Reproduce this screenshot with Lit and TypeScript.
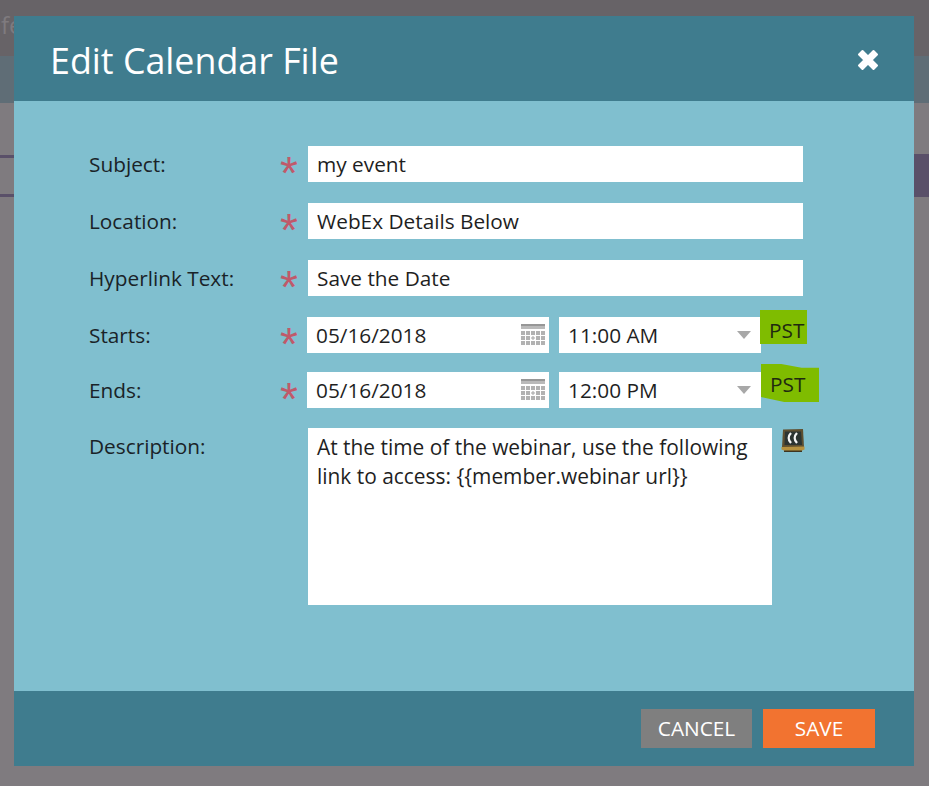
import { css, html, LitElement, svg } from 'lit'
import { customElement } from 'lit/decorators.js'

const calendarCells = [7, 12, 17].flatMap((y, row) =>
  [0, 5, 10, 15, 20].map((x, col) =>
    row === 1 && col === 2
      ? svg`<path d="M11.5 12h1v1.5h1.5v1h-1.5v1.5h-1v-1.500h-1.5v-1h1.5z" fill="#a4a4a4" />`
      : svg`<rect x=${x} y=${y} width="4" height="4" fill="#b2b2b2" />`,
  ),
)

const calendarIcon = html`
  <svg class="cal" width="24" height="22" viewBox="0 0 24 22" aria-hidden="true">
    <rect x="0" y="0" width="24" height="2" fill="#979797" />
    <rect x="0" y="2" width="24" height="3" fill="#bababa" />
    ${calendarCells}
  </svg>
`

const caretIcon = html`
  <svg class="caret" width="14" height="8" viewBox="0 0 14 8" aria-hidden="true">
    <path d="M0 0H14L7 8Z" fill="#a8a8a8" />
  </svg>
`

const boardIcon = html`
  <svg class="board" width="24" height="24" viewBox="0 0 24 24" aria-hidden="true">
    <path d="M2 0.5L22 0L23 18L1 18.5Z" fill="#5e4f30" />
    <path d="M4 2.5H20L21 16H3.5Z" fill="#2c3432" />
    <path d="M10 4C7 7 7 11 10 14M16 4C13 7 13 11 16 14" fill="none" stroke="#f4f4f4" stroke-width="2.4" />
    <path d="M0.5 18L23.5 17.5V20.5L20 22H4L0.5 20.5Z" fill="#b6913f" />
    <path d="M3 21.5H21V23H3Z" fill="#3d3420" />
  </svg>
`

@customElement('app-root')
export class AppRoot extends LitElement {
  static styles = css`
    :host {
      display: block;
      position: relative;
      width: 929px;
      height: 786px;
      overflow: hidden;
      background: #7f7b7f;
      font-family: 'Open Sans', 'Liberation Sans', sans-serif;
    }

    .backdrop-top {
      height: 56px;
      background: #676367;
      color: #7f7b7f;
      font-size: 24px;
      line-height: 50px;
      padding-left: 1px;
    }

    .backdrop-band {
      height: 47px;
      background: #5f6d76;
    }

    .backdrop-rows {
      display: flex;
      justify-content: space-between;
      margin-top: 51px;
    }

    .backdrop-lines {
      width: 14px;
      height: 43px;
      display: flex;
      flex-direction: column;
      justify-content: space-between;
      padding: 1px 0 0;
      box-sizing: border-box;
    }

    .backdrop-lines i {
      display: block;
      height: 3px;
      background: #5a5069;
    }

    .backdrop-block {
      width: 15px;
      height: 43px;
      background: #5a5069;
    }

    .modal {
      position: absolute;
      left: 14px;
      top: 16px;
      width: 900px;
      height: 750px;
      display: flex;
      flex-direction: column;
      background: #80bfcf;
    }

    header {
      flex: none;
      height: 85px;
      box-sizing: border-box;
      display: flex;
      align-items: center;
      justify-content: space-between;
      padding: 2px 34px 0 36px;
      background: #3f7c8e;
      color: #fff;
    }

    h1 {
      margin: 0;
      font-size: 35.8px;
      font-weight: 400;
      line-height: 46px;
    }

    .close {
      display: block;
    }

    .form {
      flex: 1;
      display: grid;
      grid-template-columns: 192px 27px 1fr;
      grid-template-rows: 57px 57px 57px 55px 56px 177px;
      padding: 45px 0 0 75px;
      color: #1a2328;
      font-size: 20.8px;
      line-height: 37px;
    }

    .row {
      display: contents;
    }

    .label {
      white-space: nowrap;
    }

    .star {
      color: #c0596a;
      font-family: 'Liberation Sans', sans-serif;
      font-size: 46px;
      line-height: 55px;
      height: 36px;
      margin-left: -1px;
    }

    .input {
      box-sizing: border-box;
      height: 36px;
      background: #fff;
      padding-left: 9px;
      color: #1f1f1f;
      white-space: nowrap;
    }

    .wide {
      width: 495px;
    }

    .split {
      display: flex;
      align-items: flex-start;
      margin-left: -1px;
    }

    .date {
      width: 242px;
      display: flex;
      align-items: center;
      justify-content: space-between;
      padding-right: 4px;
    }

    .time {
      width: 202px;
      margin-left: 10px;
      display: flex;
      align-items: center;
      justify-content: space-between;
      padding-right: 10px;
    }

    .tz {
      box-sizing: border-box;
      background: #7fbc00;
      color: #1f2a10;
      line-height: 40px;
      padding-left: 9px;
    }

    .tz.first {
      width: 47px;
      height: 34px;
      margin: -7px 0 0 -1px;
    }

    .tz.second {
      width: 58px;
      height: 38px;
      margin: -8px 0 0 0;
      clip-path: polygon(0 0, 35% 0, 70% 10%, 100% 10%, 100% 100%, 40% 100%, 0 87%);
    }

    .desc-wrap {
      display: flex;
      align-items: flex-start;
    }

    .textarea {
      box-sizing: border-box;
      width: 464px;
      height: 177px;
      padding: 5px 9px;
      background: #fff;
      color: #1f1f1f;
      font-size: 20.9px;
      line-height: 29px;
    }

    .board {
      margin: 1px 0 0 9px;
      display: block;
    }

    footer {
      flex: none;
      height: 75px;
      display: flex;
      justify-content: flex-end;
      gap: 11px;
      padding: 18px 39px 0 0;
      box-sizing: border-box;
      background: #3f7c8e;
    }

    .btn {
      height: 39px;
      box-sizing: border-box;
      padding-bottom: 2px;
      display: flex;
      align-items: center;
      justify-content: center;
      color: #fff;
      font-size: 20.8px;
    }

    .cancel {
      width: 111px;
      background: #7f7f7f;
    }

    .save {
      width: 112px;
      background: #f27330;
    }
  `

  private renderRow(label: string, field: unknown) {
    return html`
      <div class="row">
        <div class="label">${label}</div>
        <div class="star">*</div>
        <div class="field">${field}</div>
      </div>
    `
  }

  private renderDateTime(date: string, time: string, tzClass: string) {
    return html`
      <div class="split">
        <div class="input date">${date}${calendarIcon}</div>
        <div class="input time">${time}${caretIcon}</div>
        <div class=${`tz ${tzClass}`}>PST</div>
      </div>
    `
  }

  render() {
    return html`
      <div class="backdrop-top">fe</div>
      <div class="backdrop-band"></div>
      <div class="backdrop-rows">
        <div class="backdrop-lines"><i></i><i></i></div>
        <div class="backdrop-block"></div>
      </div>

      <div class="modal">
        <header>
          <h1>Edit Calendar File</h1>
          <svg class="close" width="24" height="24" viewBox="0 0 24 24" aria-hidden="true">
            <path d="M3 6.500L6.500 3L12 8.500L17.500 3L21 6.500L15.500 12L21 17.500L17.500 21L12 15.500L6.500 21L3 17.500L8.500 12Z" fill="#fff" stroke="#fff" stroke-width="2" stroke-linejoin="round" />
          </svg>
        </header>
        <div class="form">
          ${this.renderRow('Subject:', html`<div class="input wide">my event</div>`)}
          ${this.renderRow('Location:', html`<div class="input wide">WebEx Details Below</div>`)}
          ${this.renderRow('Hyperlink Text:', html`<div class="input wide">Save the Date</div>`)}
          ${this.renderRow('Starts:', this.renderDateTime('05/16/2018', '11:00 AM', 'first'))}
          ${this.renderRow('Ends:', this.renderDateTime('05/16/2018', '12:00 PM', 'second'))}
          <div class="row">
            <div class="label">Description:</div>
            <div></div>
            <div class="desc-wrap">
              <div class="textarea">At the time of the webinar, use the following link to access: {{member.webinar url}}</div>
              ${boardIcon}
            </div>
          </div>
        </div>
        <footer>
          <div class="btn cancel">CANCEL</div>
          <div class="btn save">SAVE</div>
        </footer>
      </div>
    `
  }
}
